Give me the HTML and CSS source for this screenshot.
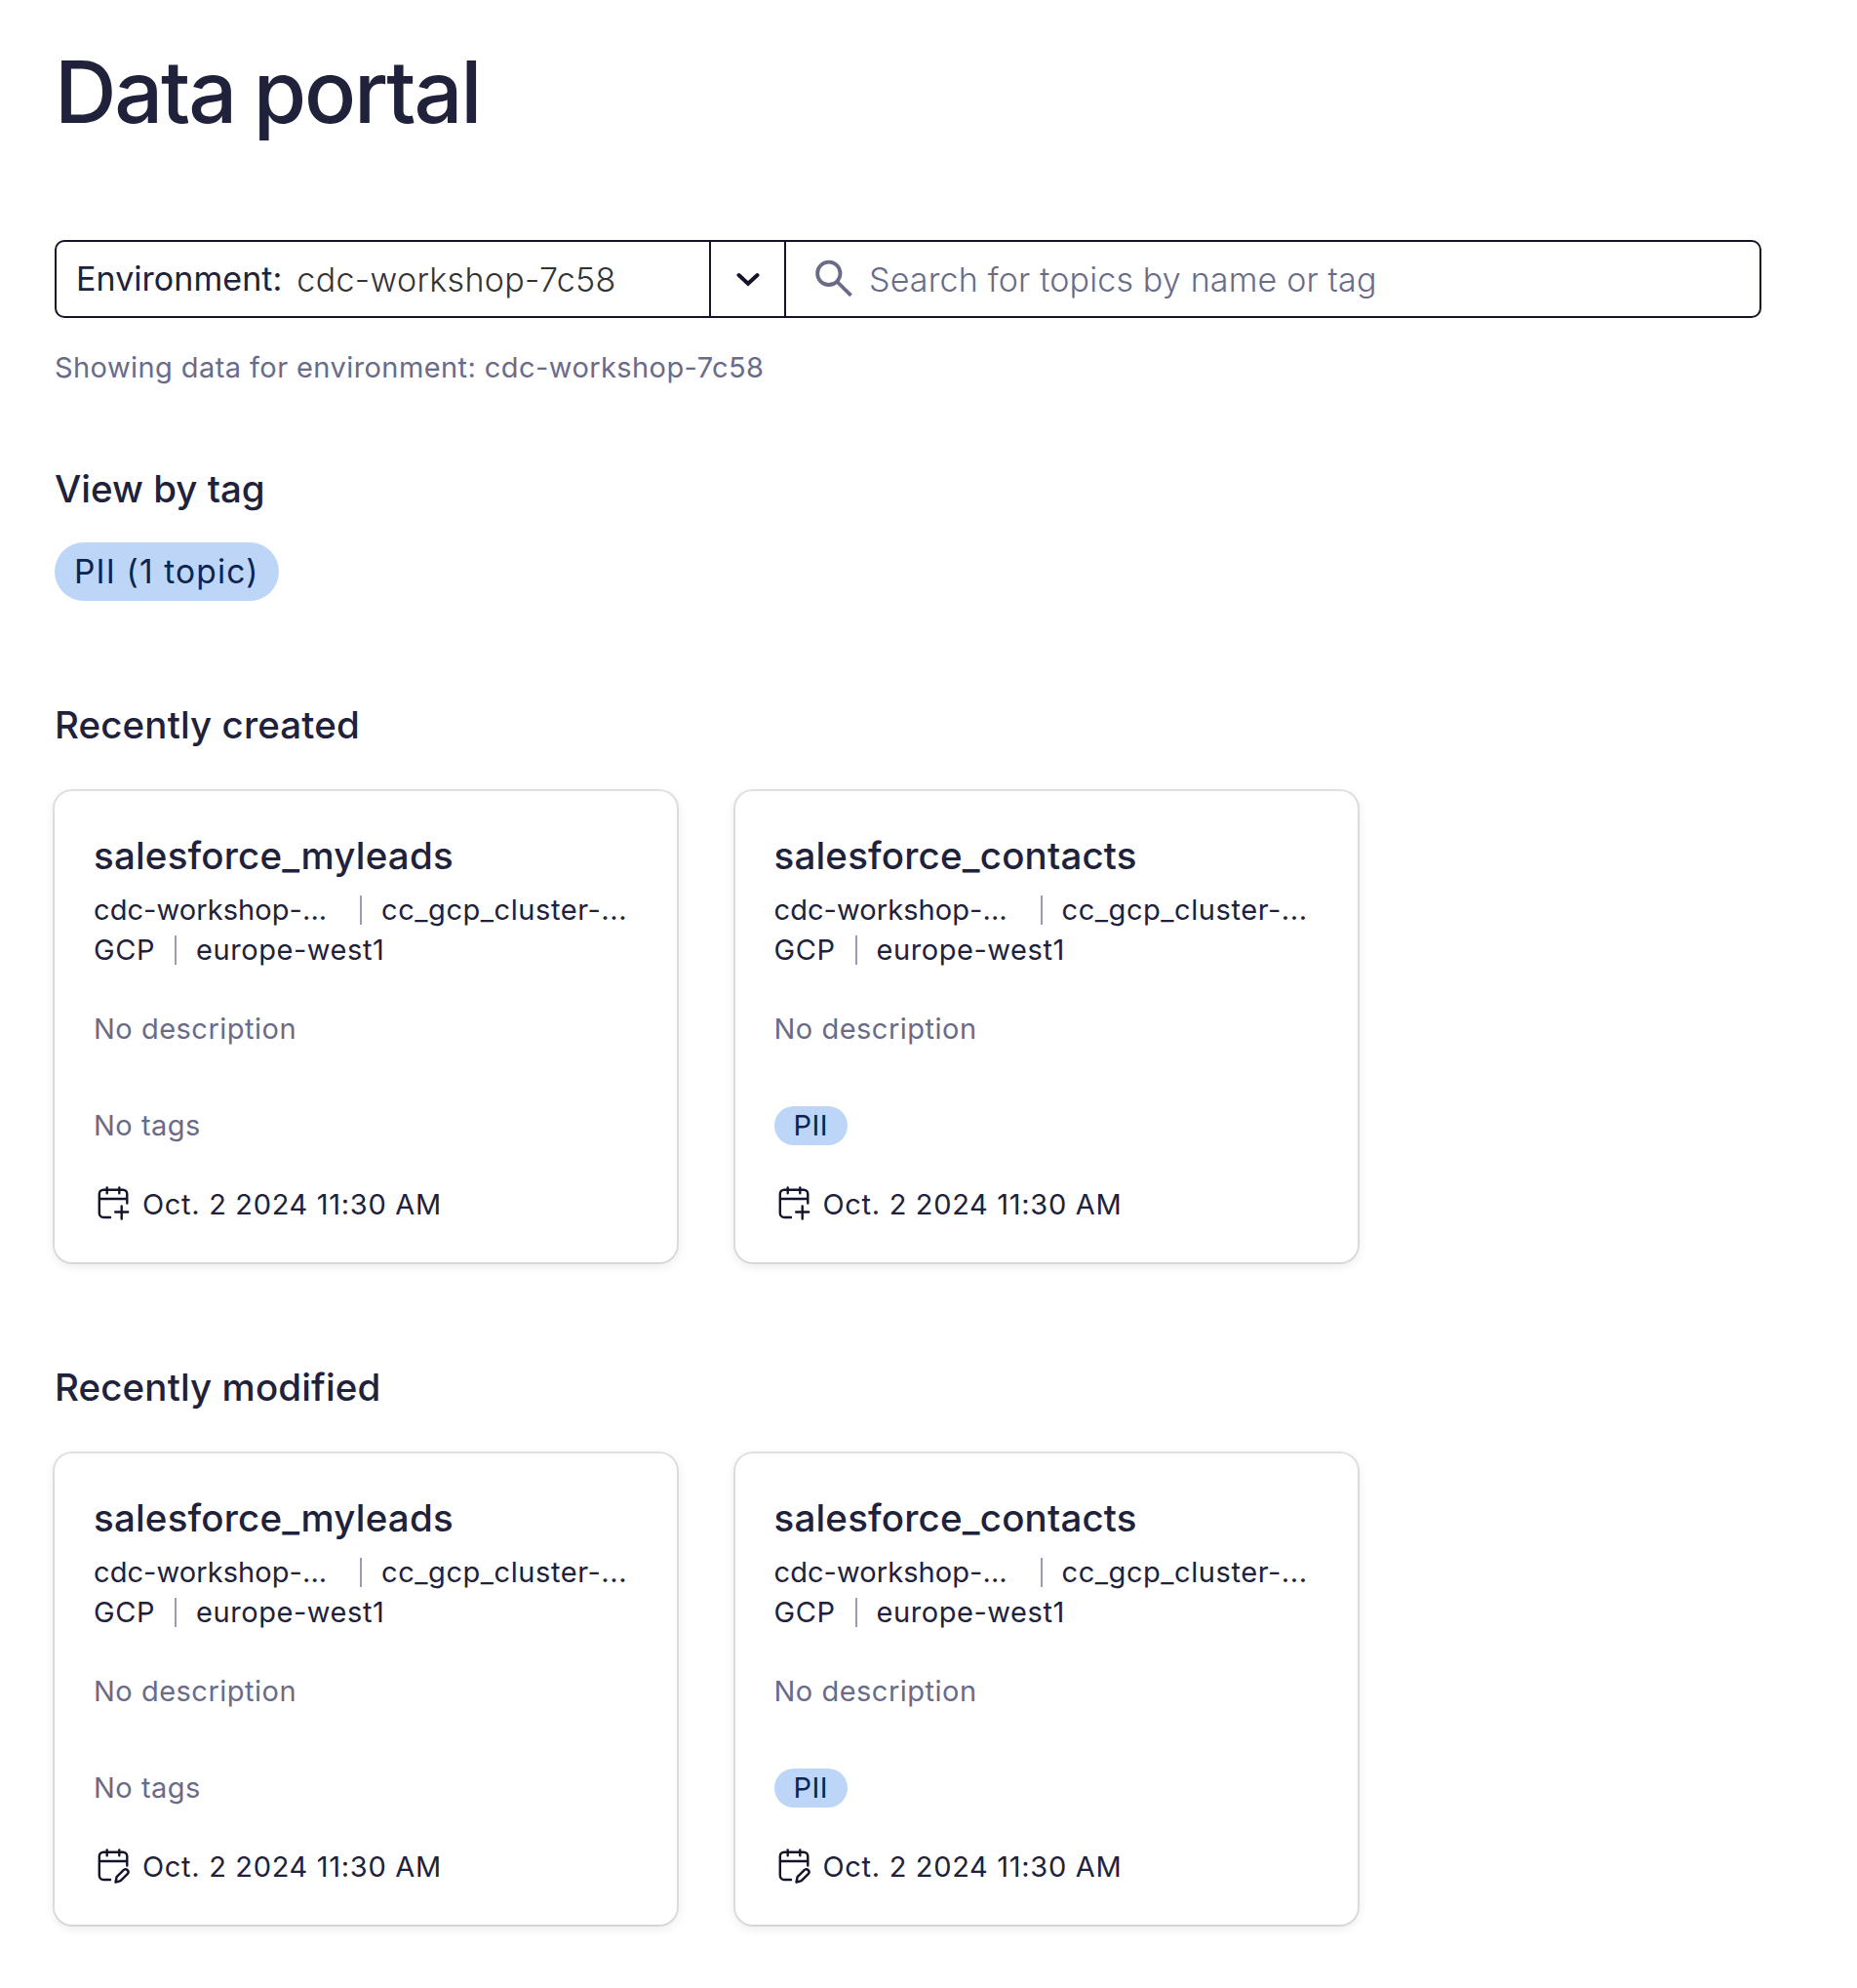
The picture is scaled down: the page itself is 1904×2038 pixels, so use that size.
FILE: index.html
```html
<!DOCTYPE html>
<html lang="en">
<head>
<meta charset="utf-8">
<title>Data portal</title>
<link rel="stylesheet" href="styles.css">
</head>
<body>
<svg class="sprite" aria-hidden="true">
  <symbol id="calendar" viewBox="0 0 40 40">
    <path d="M34.3 18.5V9a4.3 4.3 0 0 0-4.3-4.3H10.100A4.300 4.300 0 0 0 5.800 9v19.700A4.300 4.300 0 0 0 10.100 33H17M5.800 14h28.500M13.700 2.500v5.700M26.300 2.500v5.700"/>
  </symbol>
  <symbol id="created" viewBox="0 0 40 40">
    <use href="#calendar"/>
    <path d="M28.700 21.500v13M22.200 27.500h13"/>
  </symbol>
  <symbol id="modified" viewBox="0 0 40 40">
    <use href="#calendar"/>
    <path d="M22.500 35.500l1.100-5.300 7.300-7.300a2.850 2.850 0 0 1 4 4l-7.300 7.300z"/>
  </symbol>
</svg>
<main class="page">
  <h1 class="title">Data portal</h1>

  <div class="searchbar">
    <div class="env">
      <span class="env-label">Environment:</span>
      <span class="env-value">cdc-workshop-7c58</span>
    </div>
    <button class="toggle" aria-label="Choose environment">
      <svg width="28" height="20" viewBox="0 0 28 20"><path d="M4.500 5l9.500 8.800 9.500-8.800"/></svg>
    </button>
    <div class="search">
      <svg width="40" height="40" viewBox="0 0 40 40"><circle cx="14.800" cy="14.300" r="11.700"/><path d="M23 22.500l14.500 14.300"/></svg>
      <span class="placeholder">Search for topics by name or tag</span>
    </div>
  </div>
  <p class="hint">Showing data for environment: cdc-workshop-7c58</p>

  <section class="tags">
    <h2 class="heading heading-tag">View by tag</h2>
    <span class="pill">PII (1 topic)</span>
  </section>

  <section class="group">
    <h2 class="heading">Recently created</h2>
    <div class="cards">
      <article class="card">
        <h3 class="name">salesforce_myleads</h3>
        <div class="meta"><span class="environment">cdc-workshop-...</span><i class="sep"></i><span>cc_gcp_cluster-...</span></div>
        <div class="meta"><span>GCP</span><i class="sep"></i><span>europe-west1</span></div>
        <p class="description">No description</p>
        <div class="labels">No tags</div>
        <div class="date"><svg class="icon"><use href="#created"/></svg>Oct. 2 2024 11:30 AM</div>
      </article>
      <article class="card">
        <h3 class="name">salesforce_contacts</h3>
        <div class="meta"><span class="environment">cdc-workshop-...</span><i class="sep"></i><span>cc_gcp_cluster-...</span></div>
        <div class="meta"><span>GCP</span><i class="sep"></i><span>europe-west1</span></div>
        <p class="description">No description</p>
        <div class="labels"><span class="chip">PII</span></div>
        <div class="date"><svg class="icon"><use href="#created"/></svg>Oct. 2 2024 11:30 AM</div>
      </article>
    </div>
  </section>

  <section class="group">
    <h2 class="heading">Recently modified</h2>
    <div class="cards">
      <article class="card">
        <h3 class="name">salesforce_myleads</h3>
        <div class="meta"><span class="environment">cdc-workshop-...</span><i class="sep"></i><span>cc_gcp_cluster-...</span></div>
        <div class="meta"><span>GCP</span><i class="sep"></i><span>europe-west1</span></div>
        <p class="description">No description</p>
        <div class="labels">No tags</div>
        <div class="date"><svg class="icon"><use href="#modified"/></svg>Oct. 2 2024 11:30 AM</div>
      </article>
      <article class="card">
        <h3 class="name">salesforce_contacts</h3>
        <div class="meta"><span class="environment">cdc-workshop-...</span><i class="sep"></i><span>cc_gcp_cluster-...</span></div>
        <div class="meta"><span>GCP</span><i class="sep"></i><span>europe-west1</span></div>
        <p class="description">No description</p>
        <div class="labels"><span class="chip">PII</span></div>
        <div class="date"><svg class="icon"><use href="#modified"/></svg>Oct. 2 2024 11:30 AM</div>
      </article>
    </div>
  </section>
</main>
</body>
</html>
```
FILE: styles.css
```css
* {
  box-sizing: border-box;
}

body {
  margin: 0;
  background: #fff;
  color: #20213b;
  font-family: Inter, "Liberation Sans", sans-serif;
}

h1, h2, h3, p {
  margin: 0;
  font-weight: 500;
}

.sprite {
  display: none;
}

.page {
  padding: 42px 98px 62px 56px;
}

.title {
  font-size: 88px;
  line-height: 104px;
  letter-spacing: -2.2px;
  word-spacing: -2.5px;
}

/* Environment picker and search field */
.searchbar {
  display: flex;
  height: 80px;
  margin-top: 100px;
  border: 2px solid #13142a;
  border-radius: 10px;
  font-size: 34px;
  line-height: 40px;
}

.env {
  display: flex;
  align-items: center;
  gap: 15px;
  width: 671px;
  padding-left: 20px;
  border-right: 2px solid #13142a;
}

.env-label {
  letter-spacing: 0.05px;
}

.env-value {
  padding-top: 1px;
  color: #333;
  font-weight: 300;
  letter-spacing: 0.33px;
}

.toggle {
  display: flex;
  align-items: center;
  justify-content: center;
  width: 77px;
  padding: 0;
  border: 0;
  border-right: 2px solid #13142a;
  background: none;
}

.toggle svg {
  margin-top: 2px;
  fill: none;
  stroke: #13142a;
  stroke-width: 4;
  stroke-linecap: round;
}

.search {
  display: flex;
  flex: 1;
  align-items: center;
  gap: 16px;
  padding-left: 29px;
  color: #6a6b88;
}

.search svg {
  fill: none;
  stroke: currentColor;
  stroke-width: 3.8;
}

.placeholder {
  padding-top: 1px;
  font-weight: 300;
  letter-spacing: 0.17px;
}

.hint {
  margin-top: 31px;
  color: #6a6b88;
  font-size: 29px;
  font-weight: 400;
  line-height: 40px;
  letter-spacing: 0.42px;
}

/* Sections */
.heading {
  font-size: 38.5px;
  line-height: 48px;
  letter-spacing: 0.12px;
}

.heading-tag {
  letter-spacing: 0;
}

.tags {
  display: flex;
  flex-direction: column;
  align-items: flex-start;
  gap: 31px;
  margin-top: 80px;
}

.pill {
  width: 230px;
  padding-left: 20px;
  border-radius: 30px;
  background: #bdd6f8;
  color: #0c2450;
  font-size: 33.5px;
  line-height: 60px;
  letter-spacing: 1.17px;
}

.group {
  margin-top: 103px;
}

.group + .group {
  margin-top: 104px;
}

.cards {
  display: flex;
  gap: 59.5px;
  margin-top: 44px;
}

/* Topic card */
.card {
  width: 638px;
  height: 483px;
  padding: 42px 40px 0;
  border-radius: 18px;
  background: #fff;
  box-shadow: 0 0 0 2px rgba(0, 0, 0, 0.1), 0 3px 12px rgba(0, 0, 0, 0.1);
  font-size: 29px;
  line-height: 40px;
  letter-spacing: 0.56px;
}

.name {
  margin-bottom: 11px;
  font-size: 38.5px;
  line-height: 48px;
  letter-spacing: 0.18px;
}

.meta {
  display: flex;
  align-items: center;
  line-height: 41px;
}

.environment {
  width: 253px;
  letter-spacing: 0.07px;
}

.sep {
  width: 2px;
  height: 30px;
  margin: 0 20px;
  background: #9a9ab3;
}

.description,
.labels {
  color: #6a6b88;
  font-weight: 400;
  letter-spacing: 0.5px;
}

.description {
  margin-top: 41px;
}

.labels {
  display: flex;
  height: 40px;
  margin-top: 59px;
}

.chip {
  width: 75px;
  padding-left: 20px;
  border-radius: 20px;
  background: #bdd6f8;
  color: #0c2450;
}

.date {
  display: flex;
  gap: 10px;
  margin-top: 41px;
  letter-spacing: 0.68px;
}

.icon {
  width: 40px;
  height: 40px;
  fill: none;
  stroke: #13142a;
  stroke-width: 2.4;
  stroke-linecap: round;
  stroke-linejoin: round;
}
```
